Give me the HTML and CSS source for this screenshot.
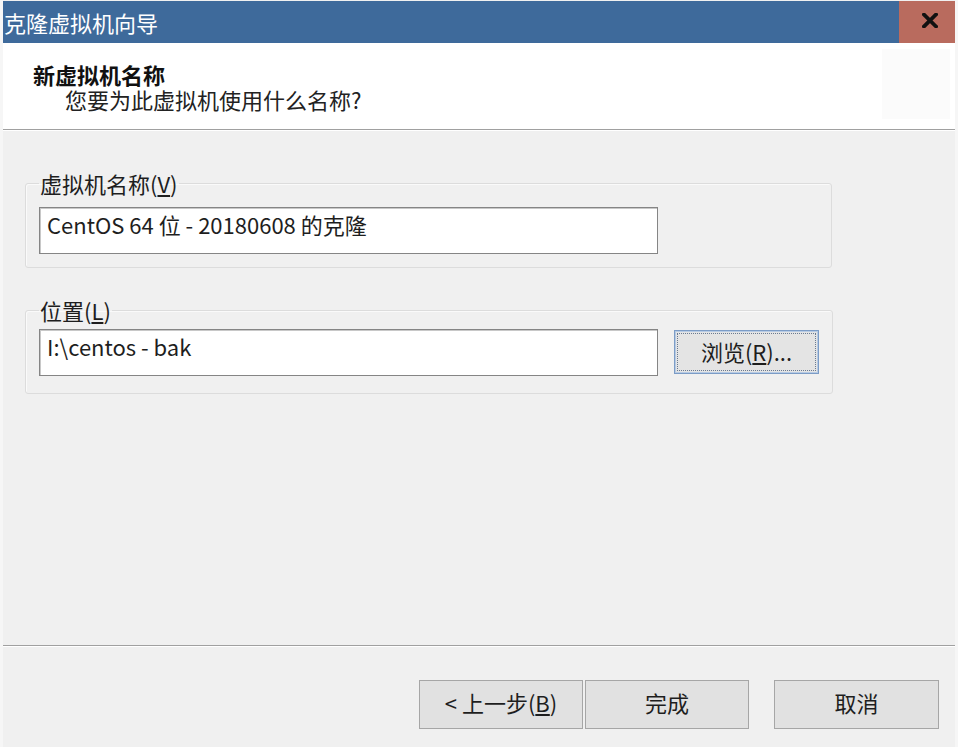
FILE: index.html
```html
<!DOCTYPE html>
<html lang="zh-CN">
<head>
<meta charset="utf-8">
<title>克隆虚拟机向导</title>
<link rel="stylesheet" href="styles.css">
</head>
<body>
<div class="window">
  <div class="titlebar">
    <div class="title">克隆虚拟机向导</div>
    <div class="close">
      <svg width="16" height="15" viewBox="0 0 16 15"><path d="M2 1.5 L14 13.5 M14 1.5 L2 13.5" stroke="#111" stroke-width="3.8" stroke-linecap="square"/></svg>
    </div>
  </div>
  <div class="header">
    <div class="header-text">
      <div class="heading">新虚拟机名称</div>
      <div class="subheading">您要为此虚拟机使用什么名称?</div>
    </div>
    <div class="header-image"></div>
  </div>
  <div class="separator"></div>
  <div class="content">
    <fieldset class="group group-name">
      <legend>虚拟机名称(<u>V</u>)</legend>
      <input class="field" type="text" value="CentOS 64 位 - 20180608 的克隆">
    </fieldset>
    <fieldset class="group group-location">
      <legend>位置(<u>L</u>)</legend>
      <div class="row">
        <input class="field" type="text" value="I:\centos - bak">
        <button class="btn browse">浏览(<u>R</u>)...</button>
      </div>
    </fieldset>
  </div>
  <div class="separator"></div>
  <div class="footer">
    <button class="btn nav">&lt; 上一步(<u>B</u>)</button>
    <button class="btn nav">完成</button>
    <button class="btn nav cancel">取消</button>
  </div>
</div>
</body>
</html>
```
FILE: styles.css
```css
* { box-sizing: border-box; }
html, body { margin: 0; padding: 0; }
body {
  background: #f6f6f6;
  font-family: "Noto Sans CJK SC", "Noto Sans", sans-serif;
  font-size: 22px;
  color: #1e1e1e;
  width: 958px;
  height: 747px;
  overflow: hidden;
}
.window {
  width: 952px;
  height: 747px;
  margin-left: 3px;
  background: #f0f0f0;
  display: flex;
  flex-direction: column;
}
.titlebar {
  margin-top: 1px;
  height: 42px;
  background: #3e6a9b;
  display: flex;
  justify-content: space-between;
  align-items: stretch;
}
.title {
  color: #ffffff;
  line-height: 42px;
  padding-left: 1px;
  font-size: 22px;
}
.close {
  width: 56px;
  background: #b96b5e;
  display: flex;
  align-items: center;
  justify-content: center;
  padding-left: 6px;
  padding-bottom: 4px;
}
.close svg { display: block; }
.header {
  height: 86px;
  background: #ffffff;
  display: flex;
  justify-content: space-between;
}
.header-text {
  padding-top: 19px;
}
.heading {
  font-weight: bold;
  line-height: 25px;
  padding-left: 30px;
  color: #111;
}
.subheading {
  line-height: 25px;
  padding-left: 62px;
  color: #222;
}
.header-image {
  width: 68px;
  height: 70px;
  margin-top: 6px;
  margin-right: 5px;
  background: #fbfbfb;
}
.separator {
  height: 2px;
  border-top: 1px solid #a0a0a0;
  border-bottom: 1px solid #ffffff;
  flex: none;
}
.content {
  flex: 1;
  padding-top: 41px;
  padding-left: 22px;
}
.group {
  width: 807px;
  margin: 0;
  border: 1px solid #dcdcdc;
  border-radius: 3px;
  box-shadow: 1px 1px 0 #fafafa inset;
  padding: 13px 13px 13px 13px;
}
.group legend {
  line-height: 22px;
  padding: 0 1px;
  margin-left: 0;
  color: #1e1e1e;
}
.group-name {
  padding-top: 13px;
  padding-bottom: 13px;
}
.group-location {
  margin-top: 31px;
  padding-top: 8px;
  padding-bottom: 17px;
}
.field {
  display: block;
  width: 619px;
  height: 47px;
  padding: 3px 7px 16px;
  border: 1px solid #858585;
  background: #ffffff;
  font-family: "Noto Sans CJK SC", "Noto Sans", sans-serif;
  font-size: 22px;
  line-height: 26px;
  color: #1e1e1e;
  outline: none;
  box-shadow: 1px 1px 0 #c8c8c8 inset;
}
.row {
  display: flex;
  align-items: flex-start;
  gap: 16px;
}
.btn {
  font-family: "Noto Sans CJK SC", "Noto Sans", sans-serif;
  font-size: 22px;
  color: #1e1e1e;
  background: #e1e1e1;
  border: 1px solid #a6a6a6;
  padding: 0;
  margin: 0;
  line-height: 26px;
}
.browse {
  width: 145px;
  height: 44px;
  margin-top: 1px;
  padding-bottom: 2px;
  border: 1px solid #7c9cc6;
  box-shadow: inset 0 0 0 1px #b7cbe4;
  outline: 1px dotted #6a7a90;
  outline-offset: -4px;
  background: #e4e4e4;
}
.footer {
  height: 100px;
  display: flex;
  align-items: flex-start;
  padding-top: 33px;
  padding-left: 416px;
}
.nav {
  width: 164px;
  height: 49px;
  margin-right: 2px;
  padding-bottom: 5px;
}
.cancel {
  margin-left: 23px;
  width: 165px;
}
u { text-underline-offset: 2px; }
```
